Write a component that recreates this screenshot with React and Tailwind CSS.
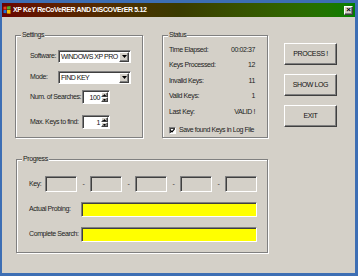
import React from "react";

const font = { fontFamily: '"Liberation Sans", Arial, sans-serif' };

const raised =
  "border border-t-white border-l-white border-r-[#404040] border-b-[#404040] shadow-[inset_-1px_-1px_0_#808080]";
const sunken =
  "border border-t-[#808080] border-l-[#808080] border-r-white border-b-white shadow-[inset_1px_1px_0_#404040]";

const Group = ({ title, className, children }) => (
  <div
    className={`relative border border-[#808080] shadow-[inset_1px_1px_0_#fff,1px_1px_0_#fff] ${className}`}
  >
    <span className="absolute -top-[5px] left-[5px] bg-[#d4d0c8] px-[1px] leading-[8px] text-[7px] tracking-[-0.4px] text-[#222]">
      {title}
    </span>
    {children}
  </div>
);

const Select = ({ value }) => (
  <div className={`flex h-[13px] w-[73px] items-center bg-white ${sunken}`}>
    <span className="flex-1 whitespace-nowrap pl-[2px] text-[7px] leading-none tracking-[-0.5px] text-[#111]">
      {value}
    </span>
    <span
      className={`mr-[1px] flex h-[10px] w-[10px] items-center justify-center bg-[#d4d0c8] ${raised}`}
    >
      <svg width="5" height="3" viewBox="0 0 5 3">
        <path d="M0 0h5L2.5 3z" fill="#000" />
      </svg>
    </span>
  </div>
);

const Spin = ({ value }) => (
  <div className={`flex h-[14px] w-[28px] items-center bg-white ${sunken}`}>
    <span className="flex-1 pr-[1px] text-right text-[7px] leading-none tracking-[-0.4px] text-[#111]">
      {value}
    </span>
    <span className="mr-[1px] flex h-[10px] w-[7px] flex-col">
      <span className={`flex flex-1 items-center justify-center bg-[#d4d0c8] ${raised}`}>
        <svg width="3" height="2" viewBox="0 0 3 2">
          <path d="M0 2h3L1.5 0z" fill="#000" />
        </svg>
      </span>
      <span className={`flex flex-1 items-center justify-center bg-[#d4d0c8] ${raised}`}>
        <svg width="3" height="2" viewBox="0 0 3 2">
          <path d="M0 0h3L1.5 2z" fill="#000" />
        </svg>
      </span>
    </span>
  </div>
);

const StatRow = ({ label, value }) => (
  <div className="flex h-[15.5px] items-center justify-between text-[7px] tracking-[-0.4px] text-[#222]">
    <span>{label}</span>
    <span>{value}</span>
  </div>
);

const Button = ({ children }) => (
  <div
    className={`flex h-[22px] w-[53px] items-center justify-center bg-[#d4d0c8] text-[7px] tracking-[-0.4px] text-[#111] ${raised}`}
  >
    {children}
  </div>
);

const KeyBox = () => <div className={`h-[16px] w-[32px] bg-[#d4d0c8] ${sunken}`} />;
const Dash = () => (
  <span className="w-[13px] text-center text-[7px] text-[#333]">-</span>
);

export default function App() {
  return (
    <div
      style={font}
      className="flex h-[276px] w-[358px] flex-col bg-[#3d6eb4] pb-[3px] pl-[2px] pr-[3px] pt-[3px]"
    >
      {/* title bar */}
      <div className="flex h-[14px] items-center bg-linear-to-r from-[#6a0000] via-[#3a3a00] to-[#008000] pl-[1px] pr-[2px]">
        <svg width="8" height="8" viewBox="0 0 8 8" className="mr-[2px]">
          <path d="M0.5 0.8l3-0.3v3H0.5z" fill="#e8401c" />
          <path d="M4 0.4l3.5-0.4v3.5H4z" fill="#4caf27" />
          <path d="M0.5 4h3v3.2l-3-0.3z" fill="#1f6fd8" />
          <path d="M4 4h3.5v3.8L4 7.4z" fill="#f6c000" />
        </svg>
        <span className="flex-1 text-[7px] font-bold tracking-[-0.35px] text-white">
          XP KeY ReCoVeRER AND DiSCOVErER 5.12
        </span>
        <span
          className={`flex h-[9px] w-[9px] items-center justify-center bg-[#d4d0c8] text-[8px] font-bold leading-none text-black ${raised}`}
        >
          ×
        </span>
      </div>

      {/* client area */}
      <div className="flex flex-1 flex-col bg-[#d4d0c8] pl-[13px] pt-[18px]">
        <div className="flex items-start">
          <Group title="Settings" className="h-[103px] w-[128px]">
            <div className="flex flex-col pl-[14px] pt-[14px] text-[7px] tracking-[-0.4px] text-[#222]">
              <div className="flex items-center">
                <span className="w-[28px]">Software:</span>
                <Select value="WINDOWS XP PRO" />
              </div>
              <div className="mt-[8px] flex items-center">
                <span className="w-[28px]">Mode:</span>
                <Select value="FIND KEY" />
              </div>
              <div className="mt-[6px] flex items-center">
                <span className="w-[52px]">Num. of Searches:</span>
                <Spin value="100" />
              </div>
              <div className="mt-[11px] flex items-center">
                <span className="w-[52px]">Max. Keys to find:</span>
                <Spin value="1" />
              </div>
            </div>
          </Group>

          <Group title="Status" className="ml-[19px] h-[103px] w-[106px]">
            <div className="flex flex-col pl-[6px] pr-[12px] pt-[6px]">
              <StatRow label="Time Elapsed:" value="00:02:37" />
              <StatRow label="Keys Processed:" value="12" />
              <StatRow label="Invalid Keys:" value="11" />
              <StatRow label="Valid Keys:" value="1" />
              <StatRow label="Last Key:" value="VALID !" />
              <div className="mt-[3px] flex h-[15px] items-center whitespace-nowrap text-[7px] tracking-[-0.45px] text-[#222]">
                <span className={`mr-[3px] flex h-[7px] w-[7px] shrink-0 items-center justify-center bg-white ${sunken}`}>
                  <svg width="5" height="5" viewBox="0 0 5 5">
                    <path d="M0.5 2.3l1.5 1.5L4.6 0.8" stroke="#000" strokeWidth="1.2" fill="none" />
                  </svg>
                </span>
                Save found Keys in Log File
              </div>
            </div>
          </Group>

          <div className="ml-[16px] mt-[8px] flex flex-col gap-[9px]">
            <Button>PROCESS !</Button>
            <Button>SHOW LOG</Button>
            <Button>EXIT</Button>
          </div>
        </div>

        <Group title="Progress" className="ml-[1px] mt-[21px] h-[94px] w-[252px]">
          <div className="flex flex-col pl-[12px] pt-[16px] text-[7px] tracking-[-0.4px] text-[#222]">
            <div className="flex items-center">
              <span className="w-[16px]">Key:</span>
              <KeyBox />
              <Dash />
              <KeyBox />
              <Dash />
              <KeyBox />
              <Dash />
              <KeyBox />
              <Dash />
              <KeyBox />
            </div>
            <div className="mt-[10px] flex items-center">
              <span className="w-[52px]">Actual Probing:</span>
              <div className={`h-[15px] w-[176px] bg-[#ffff00] ${sunken}`} />
            </div>
            <div className="mt-[10px] flex items-center">
              <span className="w-[52px]">Complete Search:</span>
              <div className={`h-[15px] w-[176px] bg-[#ffff00] ${sunken}`} />
            </div>
          </div>
        </Group>
      </div>
    </div>
  );
}
